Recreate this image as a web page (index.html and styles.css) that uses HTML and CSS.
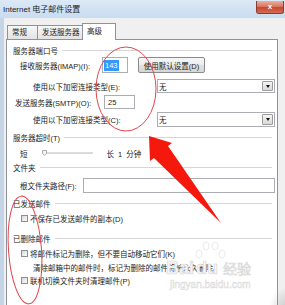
FILE: index.html
```html
<!DOCTYPE html>
<html lang="zh-CN">
<head>
<meta charset="utf-8">
<title>Internet 电子邮件设置</title>
<link rel="stylesheet" href="styles.css">
</head>
<body>
<div class="window">
  <div class="titlebar">
    <span class="title">Internet 电子邮件设置</span>
    <span class="close">x</span>
  </div>
  <div class="client">
    <div class="tabs">
      <div class="tab tab-general">常规</div>
      <div class="tab tab-send">发送服务器</div>
      <div class="tab tab-adv active">高级</div>
    </div>
    <div class="panel">
      <div class="group-title">服务器端口号</div>
      <div class="row r-imap">
        <span class="lbl-imap">接收服务器(IMAP)(I):</span>
        <span class="input in-imap"><span class="sel-text">143</span></span>
        <span class="btn">使用默认设置(D)</span>
      </div>
      <div class="row r-enc1">
        <span>使用以下加密连接类型(E):</span>
        <span class="select"><span>无</span><span class="arrow"></span></span>
      </div>
      <div class="row r-smtp">
        <span class="lbl-smtp">发送服务器(SMTP)(O):</span>
        <span class="input in-smtp">25</span>
      </div>
      <div class="row r-enc2">
        <span>使用以下加密连接类型(C):</span>
        <span class="select"><span>无</span><span class="arrow"></span></span>
      </div>

      <div class="group-title g2">服务器超时(T)</div>
      <div class="row r-timeout">
        <span>短</span>
        <svg class="slider" width="55" height="10" viewBox="0 0 55 10">
          <line x1="3" y1="5" x2="53" y2="5" stroke="#cfcfcf" stroke-width="1.5"/>
          <path d="M2.5 2.5 h4 v3 l-2 2 l-2 -2 z" fill="#f4f4f4" stroke="#9a9a9a" stroke-width="0.8"/>
        </svg>
        <span class="slider-label">长 1 分钟</span>
      </div>

      <div class="group-title g3">文件夹</div>
      <div class="row r-root">
        <span>根文件夹路径(F):</span>
        <span class="input in-root"></span>
      </div>

      <div class="group-title g4">已发送邮件</div>
      <div class="row r-cb mt3">
        <span class="cb"></span><span>不保存已发送邮件的副本(D)</span>
      </div>

      <div class="group-title g5">已删除邮件</div>
      <div class="row r-cb mt3">
        <span class="cb"></span><span>将邮件标记为删除，但不要自动移动它们(K)</span>
      </div>
      <div class="row r-note">
        <span>清除邮箱中的邮件时，标记为删除的邮件将被永久删除。</span>
      </div>
      <div class="row r-cb mt1">
        <span class="cb"></span><span>联机切换文件夹时清理邮件(P)</span>
      </div>
    </div>
  </div>
</div>

<div class="watermark">
  <div class="wm-logo"><span class="wm-bai">Bai</span><span class="wm-du">du</span><span class="wm-jy">经验</span></div>
  <div class="wm-url">jingyan.baidu.com</div>
</div>

<svg class="marks" width="285" height="305" viewBox="0 0 285 305">
  <defs>
    <radialGradient id="shade" cx="0.5" cy="0.5" r="0.5">
      <stop offset="0" stop-color="#9a9a9a" stop-opacity="0.55"/>
      <stop offset="1" stop-color="#9a9a9a" stop-opacity="0"/>
    </radialGradient>
  </defs>
  <g fill="none" stroke="#e6e6e6" stroke-width="0.8">
    <ellipse cx="199" cy="254" rx="3" ry="4"/>
    <ellipse cx="206" cy="246" rx="3" ry="4"/>
    <ellipse cx="215" cy="246" rx="3" ry="4"/>
    <ellipse cx="222" cy="254" rx="3" ry="4"/>
  </g>
  <ellipse cx="290" cy="312" rx="22" ry="26" fill="url(#shade)"/>
  <ellipse cx="126" cy="89" rx="30" ry="42" fill="none" stroke="#e2474b" stroke-width="1"/>
  <ellipse cx="25" cy="250" rx="16.5" ry="54" fill="none" stroke="#e2474b" stroke-width="1" transform="rotate(-4 25 250)"/>
  <polygon points="149,136 172,143 168,146 221,223 154,158 150,161" fill="#f5190d"/>
</svg>
</body>
</html>
```

FILE: styles.css
```css
* { box-sizing: border-box; }

html, body { margin: 0; padding: 0; }

body {
  width: 285px;
  height: 305px;
  overflow: hidden;
  position: relative;
  background: #f0f0f0;
  font-family: "Liberation Sans", "Noto Sans CJK SC", sans-serif;
  font-size: 7.5px;
  color: #222;
}

.window {
  display: flex;
  flex-direction: column;
  height: 305px;
}

.titlebar {
  height: 18px;
  flex: none;
  display: flex;
  align-items: flex-start;
  justify-content: space-between;
  background: linear-gradient(#dce9f6, #c9dcf0);
}

.title {
  font-size: 8px;
  line-height: 19px;
  padding-left: 3px;
  color: #1a1a1a;
  white-space: nowrap;
}

.close {
  width: 28px;
  height: 13px;
  margin: 1px 1px 0 0;
  border: 1px solid #8e3b2d;
  border-top: none;
  border-radius: 0 0 3px 3px;
  background: linear-gradient(#eab0a2, #d9735e 48%, #c5472f 52%, #d66b50);
  color: #fff;
  font-size: 8px;
  font-weight: bold;
  line-height: 11px;
  text-align: center;
}

.client {
  flex: 1;
  display: flex;
  flex-direction: column;
  border-left: 4px solid #c4d5e8;
  padding: 5px 0 0 2px;
  background: #f0f0f0;
}

.tabs {
  display: flex;
  align-items: flex-end;
  height: 16px;
  margin-left: 1px;
  position: relative;
  z-index: 1;
  flex: none;
}

.tab {
  height: 14px;
  border: 1px solid #8e939b;
  border-bottom: none;
  background: linear-gradient(#f7f7f7, #e3e3e3);
  padding-left: 4px;
  line-height: 13px;
  white-space: nowrap;
}

.tab + .tab { margin-left: -1px; }

.tab-general { width: 31px; }
.tab-send { width: 46px; }
.tab-adv { width: 34px; }

.tab.active {
  height: 17px;
  margin-bottom: -1px;
  background: #fff;
  line-height: 15px;
}

.panel {
  flex: 1;
  margin-right: 7px;
  background: #fff;
  border: 1px solid #8e939b;
  border-bottom: none;
  padding: 4px 2px 0 6px;
  display: flex;
  flex-direction: column;
}

.group-title {
  display: flex;
  align-items: center;
  height: 12px;
  margin-right: 3px;
  flex: none;
  white-space: nowrap;
}

.group-title::after {
  content: "";
  flex: 1;
  height: 1px;
  margin-left: 4px;
  background: #d6d6d6;
}

.g2 { margin-top: 4px; }
.g3 { margin-top: 2px; }
.g4 { margin-top: 4px; }
.g5 { margin-top: 8px; }

.row {
  display: flex;
  align-items: center;
  flex: none;
  white-space: nowrap;
}

.input {
  height: 100%;
  border: 1px solid #abadb3;
  background: #fff;
  display: flex;
  align-items: center;
}

.r-imap { margin-top: 1px; height: 16px; padding-left: 7px; }
.lbl-imap { width: 82px; }
.in-imap { width: 26px; padding-left: 1px; }

.sel-text {
  background: #3399ff;
  color: #fff;
  line-height: 11px;
  padding: 0 1px;
}

.btn {
  margin-left: 10px;
  width: 67px;
  height: 16px;
  border: 1px solid #8a8a8a;
  border-radius: 2px;
  background: linear-gradient(#f6f6f6, #ececec 50%, #e0e0e0 51%, #d6d6d6);
  display: flex;
  align-items: center;
  justify-content: center;
}

.r-enc1 { margin-top: 6px; height: 14px; padding-left: 20px; }
.r-enc2 { margin-top: 3px; height: 15px; padding-left: 20px; }

.select {
  margin-left: auto;
  width: 118px;
  height: 100%;
  border: 1px solid #abadb3;
  background: #fff;
  display: flex;
  align-items: center;
  justify-content: space-between;
  padding-left: 1px;
}

.arrow {
  width: 11px;
  height: calc(100% - 2px);
  margin-right: 1px;
  border: 1px solid #9c9c9c;
  border-radius: 1px;
  background: linear-gradient(#f4f4f4, #d9d9d9);
  display: flex;
  align-items: center;
  justify-content: center;
}

.arrow::before {
  content: "";
  border-left: 2.5px solid transparent;
  border-right: 2.5px solid transparent;
  border-top: 3px solid #111;
}

.r-smtp { margin-top: 2px; height: 14px; padding-left: 2px; }
.lbl-smtp { width: 89px; }
.in-smtp { width: 31px; padding-left: 3px; }

.r-timeout { margin-top: 4px; height: 12px; padding-left: 7px; }
.slider { margin-left: 12px; flex: none; }
.slider-label { margin-left: 12px; word-spacing: 2px; }

.r-root { margin-top: 5px; height: 15px; padding-left: 7px; }
.in-root { margin-left: auto; width: 192px; }

.r-cb { height: 12px; padding-left: 8px; }
.mt1 { margin-top: 1px; }
.mt3 { margin-top: 3px; }

.cb {
  width: 7px;
  height: 7px;
  margin-right: 2px;
  border: 1px solid #8f8f8f;
  background: linear-gradient(135deg, #d9d9d9, #fbfbfb);
  flex: none;
}

.r-note { margin-top: 2px; height: 12px; padding-left: 20px; }

.watermark {
  position: absolute;
  left: 166px;
  top: 257px;
  color: #f6f6f6;
  -webkit-text-stroke: 0.6px #d6d6d6;
  pointer-events: none;
}

.wm-logo {
  display: flex;
  align-items: baseline;
  white-space: nowrap;
}

.wm-bai, .wm-du {
  font-family: "Liberation Sans", sans-serif;
  font-weight: bold;
  font-size: 18px;
  line-height: 22px;
}

.wm-du { margin-left: 2px; }

.wm-jy {
  font-family: "Noto Sans CJK SC", sans-serif;
  font-size: 14px;
  margin-left: 5px;
}

.wm-url {
  font-family: "Liberation Sans", sans-serif;
  font-size: 10px;
  line-height: 12px;
  margin-left: 4px;
  -webkit-text-stroke: 0.4px #d6d6d6;
}

.marks {
  position: absolute;
  left: 0;
  top: 0;
  pointer-events: none;
}
```
